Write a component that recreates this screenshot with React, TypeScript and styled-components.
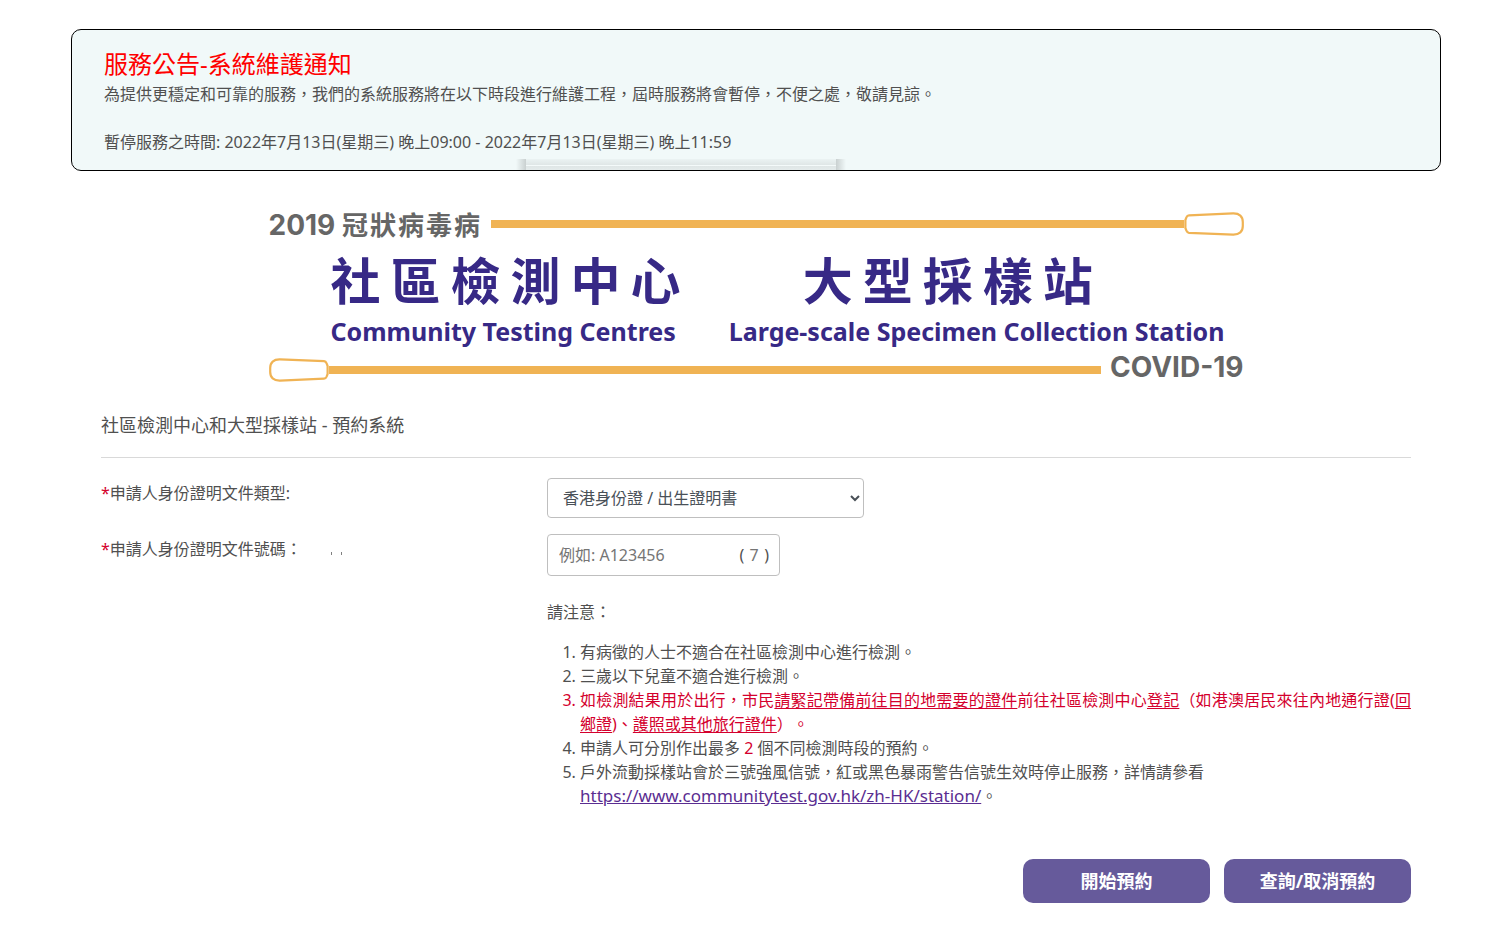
import React from "react";
import styled, { createGlobalStyle, css } from "styled-components";

const SANS = `"Noto Sans", "Noto Sans CJK TC", sans-serif`;

const GlobalStyle = createGlobalStyle`
  *, *::before, *::after { box-sizing: border-box; }
  body {
    margin: 0;
    background: #fff;
    color: #505050;
    font: 16px/24px ${SANS};
    text-spacing-trim: space-all;
  }
  button, input, select { font: inherit; }
`;

const Page = styled.div`
  padding: 29px 46px 26px 71px;
`;

const Notice = styled.section`
  position: relative;
  padding: 16px 32px;
  border: 1px solid #000;
  border-radius: 10px;
  background: #f1f9f9;
`;

const NoticeTitle = styled.h1`
  margin: 0;
  color: #f00;
  font-size: 24px;
  font-weight: 400;
  line-height: 36px;
`;

const NoticeText = styled.p`
  margin: 0 0 24px;

  &:last-of-type {
    margin-bottom: 0;
  }
`;

const DialogEdge = styled.div`
  position: absolute;
  left: 444px;
  bottom: 0;
  display: grid;
  grid-template-columns: 10px 310px 10px;
  height: 11px;
`;

const EdgeSide = styled.span<{ $side: "left" | "right" }>`
  background: linear-gradient(to ${(p) => p.$side}, #c9d0d0, rgba(241, 249, 249, 0));
`;

const EdgeMiddle = styled.span`
  background: linear-gradient(
    #ebf3f3 0,
    #dfe6e6 6px,
    #f4fafa 6px,
    #f4fafa 7px,
    #dfe6e6 7px,
    #e4ebeb 11px
  );
`;

const Banner = styled.header`
  display: flex;
  flex-direction: column;
  max-width: 975px;
  margin: 36px auto 0;
`;

const SwabRow = styled.div`
  display: flex;
  align-items: center;
  gap: 9px;
  height: 34px;
`;

const Swab = styled.span`
  display: flex;
  flex: 1;
  align-items: center;
`;

const Disease = styled.span<{ $raised?: boolean }>`
  padding-bottom: ${(p) => (p.$raised ? 6 : 0)}px;
  color: #666;
  font-family: Inter, sans-serif;
  font-weight: 700;
  font-size: 28px;
  line-height: 34px;
  white-space: nowrap;
`;

const DiseaseChinese = styled.span`
  font-family: "Noto Sans CJK TC", sans-serif;
  font-size: 26px;
  letter-spacing: 2px;
`;

const Stick = styled.span`
  flex: 1;
  height: 8px;
  background: #f0b354;
`;

const Tip = styled.svg<{ $flip?: boolean }>`
  width: 60px;
  height: 24px;
  ${(p) => p.$flip && css`transform: rotate(180deg);`}
`;

const Centres = styled.div`
  display: flex;
  justify-content: space-between;
  padding: 2px 19px 4px 62px;
  color: #372986;
`;

const Centre = styled.div`
  display: flex;
  flex-direction: column;
`;

const CentreName = styled.span<{ $indent?: boolean }>`
  padding-left: ${(p) => (p.$indent ? 74 : 0)}px;
  font-family: "Noto Sans CJK TC", sans-serif;
  font-size: 50px;
  font-weight: 700;
  line-height: 70px;
  letter-spacing: 10px;
`;

const CentreEnglish = styled.span`
  font-size: 25px;
  font-weight: 700;
  line-height: 36px;
`;

const Main = styled.main`
  padding: 0 30px;
`;

const SystemTitle = styled.h2`
  margin: 24px 0 20px;
  padding-bottom: 18px;
  border-bottom: 1px solid #d9d9d9;
  font-size: 18px;
  font-weight: 400;
  line-height: 28px;
`;

const FormRow = styled.div`
  display: grid;
  grid-template-columns: 1fr 2fr;
  column-gap: 14px;
  align-items: start;
  margin-bottom: 16px;
`;

const Label = styled.label`
  padding-top: 3px;
`;

const Required = styled.span`
  color: #d4002d;
`;

const Ticks = styled.span`
  display: inline-flex;
  gap: 9px;
  margin-left: 29px;

  &::before, &::after {
    content: "";
    width: 1px;
    height: 3px;
    background: #808080;
  }
`;

const Select = styled.select`
  width: 317px;
  height: 40px;
  padding: 0 0 0 11px;
  border: 1px solid #bfbfbf;
  border-radius: 4px;
  background-color: #fff;
  color: #495057;
`;

const NumberBox = styled.div`
  display: flex;
  align-items: center;
  width: 233px;
  height: 42px;
  padding: 0 10px 0 11px;
  border: 1px solid #bfbfbf;
  border-radius: 4px;
`;

const TextInput = styled.input<{ $digit?: boolean }>`
  min-width: 0;
  padding: 0;
  border: 0;
  outline: 0;
  background: transparent;
  color: #505050;
  ${(p) => (p.$digit ? css`width: 20px; text-align: center;` : css`flex: 1;`)}

  &::placeholder {
    color: #757575;
    opacity: 1;
  }
`;

const Remarks = styled.section`
  grid-column: 2;
  margin-top: 8px;
`;

const RemarksTitle = styled.p`
  margin: 0 0 16px;
`;

const RemarkList = styled.ol`
  margin: 0;
  padding-left: 33px;
`;

const Remark = styled.li<{ $alert?: boolean }>`
  ${(p) => p.$alert && css`color: #d4002d; text-align: justify;`}
`;

const Underlined = styled.u`
  text-underline-offset: 2px;
`;

const StationLink = styled.a`
  color: #5a2d91;
  font-size: 17px;
`;

const Actions = styled.div`
  display: flex;
  justify-content: flex-end;
  gap: 14px;
  margin-top: 51px;
`;

const ActionButton = styled.button`
  width: 187px;
  height: 44px;
  padding: 0;
  border: 0;
  border-radius: 10px;
  background: #665a9b;
  color: #fff;
  font-size: 18px;
  font-weight: 700;
  cursor: pointer;
`;

function SwabTip({ flip }: { flip?: boolean }) {
  return (
    <Tip $flip={flip} viewBox="0 0 60 24" aria-hidden="true">
      <path
        d="M5 3.4 L49 1.4 C55.5 1.2 58.8 4.5 58.8 10 V14 C58.8 19.5 55.5 22.8 49 22.6 L5 20.8 Q3.2 20.6 2.4 18.6 L1.4 16 V8 L2.4 5.4 Q3.2 3.5 5 3.4 Z"
        fill="#fff"
        stroke="#f0b354"
        strokeWidth="2.2"
      />
    </Tip>
  );
}

export default function App() {
  return (
    <>
      <GlobalStyle />
      <Page>
        <Notice>
          <NoticeTitle>服務公告-系統維護通知</NoticeTitle>
          <NoticeText>
            為提供更穩定和可靠的服務，我們的系統服務將在以下時段進行維護工程，屆時服務將會暫停，不便之處，敬請見諒。
          </NoticeText>
          <NoticeText>暫停服務之時間: 2022年7月13日(星期三) 晚上09:00 - 2022年7月13日(星期三) 晚上11:59</NoticeText>
          <DialogEdge aria-hidden="true">
            <EdgeSide $side="left" />
            <EdgeMiddle />
            <EdgeSide $side="right" />
          </DialogEdge>
        </Notice>

        <Banner>
          <SwabRow>
            <Disease>
              2019 <DiseaseChinese>冠狀病毒病</DiseaseChinese>
            </Disease>
            <Swab>
              <Stick />
              <SwabTip />
            </Swab>
          </SwabRow>
          <Centres>
            <Centre>
              <CentreName>社區檢測中心</CentreName>
              <CentreEnglish>Community Testing Centres</CentreEnglish>
            </Centre>
            <Centre>
              <CentreName $indent>大型採樣站</CentreName>
              <CentreEnglish>Large-scale Specimen Collection Station</CentreEnglish>
            </Centre>
          </Centres>
          <SwabRow>
            <Swab>
              <SwabTip flip />
              <Stick />
            </Swab>
            <Disease $raised>COVID-19</Disease>
          </SwabRow>
        </Banner>

        <Main>
          <SystemTitle>社區檢測中心和大型採樣站 - 預約系統</SystemTitle>
          <form onSubmit={(e) => e.preventDefault()}>
            <FormRow>
              <Label htmlFor="doc-type">
                <Required>*</Required>申請人身份證明文件類型:
              </Label>
              <Select id="doc-type" defaultValue="hkid">
                <option value="hkid">香港身份證 / 出生證明書</option>
              </Select>
            </FormRow>
            <FormRow>
              <Label htmlFor="doc-number">
                <Required>*</Required>申請人身份證明文件號碼：
                <Ticks aria-hidden="true" />
              </Label>
              <NumberBox>
                <TextInput id="doc-number" type="text" placeholder="例如: A123456" />
                (
                <TextInput $digit type="text" placeholder="7" maxLength={1} aria-label="7" />
                )
              </NumberBox>
            </FormRow>
            <FormRow>
              <Remarks>
                <RemarksTitle>請注意：</RemarksTitle>
                <RemarkList>
                  <Remark>有病徵的人士不適合在社區檢測中心進行檢測。</Remark>
                  <Remark>三歲以下兒童不適合進行檢測。</Remark>
                  <Remark $alert>
                    如檢測結果用於出行，市民<Underlined>請緊記帶備前往目的地需要的證件</Underlined>
                    前往社區檢測中心<Underlined>登記</Underlined>（如港澳居民來往內地通行證(
                    <Underlined>回鄉證</Underlined>)、<Underlined>護照或其他旅行證件</Underlined>）。
                  </Remark>
                  <Remark>
                    申請人可分別作出最多 <Required>2</Required> 個不同檢測時段的預約。
                  </Remark>
                  <Remark>
                    戶外流動採樣站會於三號強風信號，紅或黑色暴雨警告信號生效時停止服務，詳情請參看{" "}
                    <StationLink href="https://www.communitytest.gov.hk/zh-HK/station/">
                      https://www.communitytest.gov.hk/zh-HK/station/
                    </StationLink>
                    。
                  </Remark>
                </RemarkList>
              </Remarks>
            </FormRow>
            <Actions>
              <ActionButton type="submit">開始預約</ActionButton>
              <ActionButton type="button">查詢/取消預約</ActionButton>
            </Actions>
          </form>
        </Main>
      </Page>
    </>
  );
}
